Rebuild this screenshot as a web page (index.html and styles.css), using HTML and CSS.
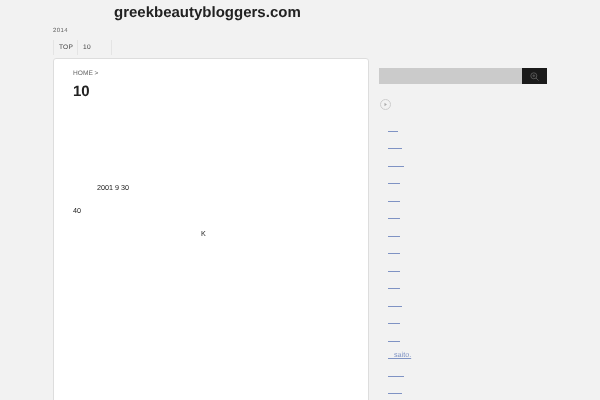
FILE: index.html
```html
<!DOCTYPE html>
<html lang="en">
<head>
    <meta charset="UTF-8">
    <title>greekbeautybloggers.com</title>
    <link rel="stylesheet" href="styles.css">
</head>
<body>

<div class="wrapper">
    <h1 class="site-title">greekbeautybloggers.com</h1>
    <p class="site-year">2014</p>

    <ul class="nav">
        <li class="nav_item"><a href="#">TOP</a></li>
        <li class="nav_item nav_item-wide"><a href="#">10</a></li>
    </ul>

    <div class="columns">
        <div class="main">
            <p class="breadcrumb"><a href="#">HOME</a> &gt;</p>
            <h2 class="main_title">10</h2>
            <p class="main_date">2001 9 30</p>
            <p class="main_age">40</p>
            <p class="main_letter">K</p>
        </div>

        <div class="side">
            <form class="search">
                <div class="search_input"></div>
                <button class="search_button" type="button" aria-label="search">
                    <svg width="9" height="9" viewBox="0 0 9 9" fill="none" stroke="#555" stroke-width="1">
                        <circle cx="3.8" cy="3.8" r="3"/>
                        <path d="M6 6l2.6 2.6M2.4 3.8h2.8M3.8 2.4v2.8"/>
                    </svg>
                </button>
            </form>

            <div class="side_head">
                <svg width="11" height="11" viewBox="0 0 11 11">
                    <circle cx="5.5" cy="5.5" r="5" fill="none" stroke="#ccc" stroke-width="1"/>
                    <path d="M4.5 3.7l2.4 1.8-2.4 1.8z" fill="#aaa"/>
                </svg>
            </div>

            <ul class="side-list">
                <li><a href="#">&nbsp;&nbsp;&nbsp;&nbsp;&nbsp;</a></li>
                <li><a href="#">&nbsp;&nbsp;&nbsp;&nbsp;&nbsp;&nbsp;&nbsp;</a></li>
                <li><a href="#">&nbsp;&nbsp;&nbsp;&nbsp;&nbsp;&nbsp;&nbsp;&nbsp;</a></li>
                <li><a href="#">&nbsp;&nbsp;&nbsp;&nbsp;&nbsp;&nbsp;</a></li>
                <li><a href="#">&nbsp;&nbsp;&nbsp;&nbsp;&nbsp;&nbsp;</a></li>
                <li><a href="#">&nbsp;&nbsp;&nbsp;&nbsp;&nbsp;&nbsp;</a></li>
                <li><a href="#">&nbsp;&nbsp;&nbsp;&nbsp;&nbsp;&nbsp;</a></li>
                <li><a href="#">&nbsp;&nbsp;&nbsp;&nbsp;&nbsp;&nbsp;</a></li>
                <li><a href="#">&nbsp;&nbsp;&nbsp;&nbsp;&nbsp;&nbsp;</a></li>
                <li><a href="#">&nbsp;&nbsp;&nbsp;&nbsp;&nbsp;&nbsp;</a></li>
                <li><a href="#">&nbsp;&nbsp;&nbsp;&nbsp;&nbsp;&nbsp;&nbsp;</a></li>
                <li><a href="#">&nbsp;&nbsp;&nbsp;&nbsp;&nbsp;&nbsp;</a></li>
                <li><a href="#">&nbsp;&nbsp;&nbsp;&nbsp;&nbsp;&nbsp;</a></li>
                <li><a href="#">&nbsp;&nbsp;&nbsp;saito.</a></li>
                <li><a href="#">&nbsp;&nbsp;&nbsp;&nbsp;&nbsp;&nbsp;&nbsp;&nbsp;</a></li>
                <li><a href="#">&nbsp;&nbsp;&nbsp;&nbsp;&nbsp;&nbsp;&nbsp;</a></li>
            </ul>
        </div>
    </div>
</div>

</body>
</html>
```

FILE: styles.css
```css
html, body {
    height: 100%;
}

body {
    margin: 0;
    background: #f2f2f2;
    color: #222;
    font-family: "Liberation Sans", Arial, sans-serif;
    text-rendering: geometricPrecision;
    overflow: hidden;
}

a {
    color: inherit;
    text-decoration: none;
}

.wrapper {
    width: 494px;
    height: 100vh;
    margin-left: 53px;
    overflow: hidden;
    will-change: transform;
}

.site-title {
    margin: 0;
    padding: 3px 0 0 61px;
    font-size: 15px;
    line-height: 20px;
    font-weight: bold;
    color: #222;
}

.site-year {
    margin: 0;
    padding-top: 4px;
    font-size: 6px;
    line-height: 8px;
    letter-spacing: 0.4px;
    color: #666;
}

.nav {
    display: flex;
    margin: 5px 0 0;
    padding: 0;
    list-style: none;
    height: 15px;
}

.nav_item {
    border-left: 1px solid #e4e4e4;
    padding: 0 4px 0 5px;
    font-size: 6.6px;
    line-height: 15px;
    letter-spacing: 0.2px;
    color: #444;
}

.nav_item-wide {
    width: 24px;
    padding-left: 5px;
    border-right: 1px solid #e4e4e4;
}

.columns {
    display: flex;
    gap: 10px;
    margin-top: 3px;
}

.main {
    width: 316px;
    height: 350px;
    box-sizing: border-box;
    background: #fff;
    border: 1px solid #ddd;
    border-radius: 3px;
    padding: 10px 19px;
    font-size: 7.2px;
    line-height: 10px;
    color: #222;
}

.main p {
    margin: 0;
}

.breadcrumb {
    color: #666;
    font-size: 6.6px;
}

.main_title {
    margin: 3px 0 0;
    font-size: 15px;
    line-height: 20px;
    font-weight: bold;
}

.main .main_date {
    margin-top: 81px;
    padding-left: 24px;
}

.main .main_age {
    margin-top: 13px;
}

.main .main_letter {
    margin-top: 13px;
    padding-left: 128px;
}

.side {
    width: 168px;
    padding-top: 10px;
}

.search {
    display: flex;
    height: 16px;
    margin: 0;
}

.search_input {
    flex: 1;
    background: #cbcbcb;
}

.search_button {
    width: 25px;
    padding: 0;
    display: flex;
    align-items: center;
    justify-content: center;
    background: #1a1a1a;
    border: 0;
}

.side_head {
    margin: 12.5px 0 0 1px;
    height: 11px;
}

.side-list {
    margin: 15px 0 0;
    padding: 0 0 0 9px;
    list-style: none;
    font-size: 7.2px;
}

.side-list li {
    height: 17.5px;
    line-height: 10px;
}

.side-list a {
    color: #7f93c4;
    text-decoration: underline;
}
```
